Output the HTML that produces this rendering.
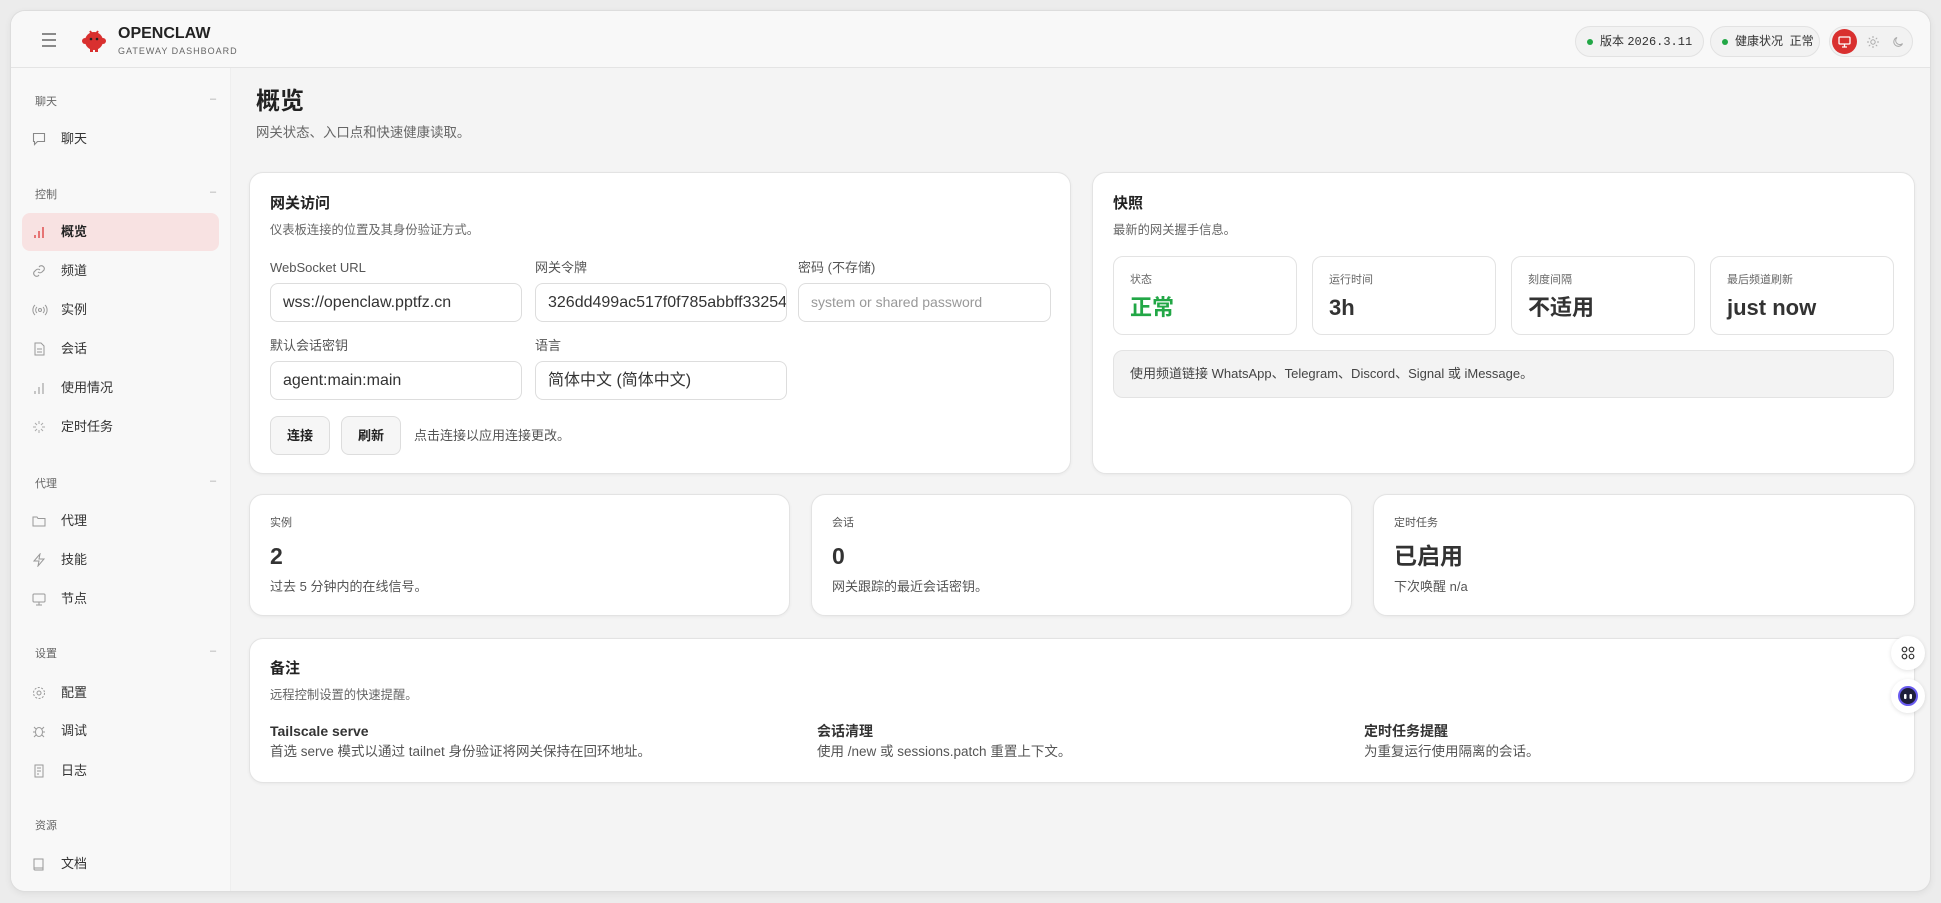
<!DOCTYPE html>
<html><head><meta charset="utf-8"><style>
*{box-sizing:border-box;margin:0;padding:0}
body{width:1941px;height:903px;background:#ececec;font-family:"Liberation Sans","Noto Sans CJK SC",sans-serif;color:#222;position:relative;overflow:hidden}
.a{position:absolute}
.card .a,.t1{line-height:1}
.win{left:11px;top:11px;width:1919px;height:880px;background:#f4f4f4;border-radius:14px;overflow:hidden;box-shadow:0 0 0 1px #ddd,0 2px 8px rgba(0,0,0,.08)}
.hdr{left:0;top:0;width:1919px;height:57px;background:#f8f8f8;border-bottom:1px solid #e4e4e4}
.side{left:0;top:57px;width:220px;height:823px;background:#f8f8f8;border-right:1px solid #eee}
.sec{font-size:11px;color:#666;left:24px}
.sec i{position:absolute;left:175px;top:0;font-style:normal;color:#aaa}
.it{left:11px;width:197px;height:38px;font-size:13px;color:#333;line-height:38px;padding-left:39px;border-radius:8px}
.it svg{position:absolute;left:10px;top:12px}
.act{background:#f8e2e2;color:#222;font-weight:bold}
.card{background:#fff;border:1px solid #e3e3e3;border-radius:14px;box-shadow:0 1px 3px rgba(0,0,0,.05)}
.ct{font-size:15px;font-weight:bold;color:#222}
.cs{font-size:13px;color:#666}
.cs2{font-size:12.3px;color:#666}
.lb{font-size:13px;color:#555}
.card .in{height:39px;border:1px solid #ddd;border-radius:8px;font-size:16px;color:#333;line-height:37px;padding-left:12px;background:#fff;overflow:hidden;white-space:nowrap}
.card .btn{height:39px;border:1px solid #ddd;border-radius:8px;background:#f6f6f6;font-size:13px;font-weight:bold;line-height:37px;text-align:center}
.st{border:1px solid #e3e3e3;border-radius:10px;width:184px;height:79px}
.st .l{position:absolute;left:16px;top:18px;font-size:11px;color:#666;line-height:1}
.st .v{position:absolute;left:16px;top:40px;font-size:22px;font-weight:bold;color:#333;line-height:1}
.pill{top:15px;height:31px;border:1px solid #e2e2e2;border-radius:16px;background:#f2f2f2;font-size:12px;line-height:29px;padding-left:24px;color:#333}
.pill b{position:absolute;left:11px;top:12px;width:6px;height:6px;border-radius:3px;background:#22a746}
.big{font-size:23px;font-weight:bold;color:#333}
</style></head><body>
<div class="a win">
 <div class="a hdr">
  <svg class="a" style="left:30px;top:22px" width="16" height="14" viewBox="0 0 16 14"><path d="M1 1h14M1 7h14M1 13h14" stroke="#666" stroke-width="1.6"/></svg>
  <svg class="a" style="left:70px;top:16px" width="26" height="26" viewBox="0 0 26 26"><ellipse cx="13" cy="14" rx="9" ry="9" fill="#d9302f"/><circle cx="4" cy="14" r="3" fill="#d9302f"/><circle cx="22" cy="14" r="3" fill="#d9302f"/><path d="M9 4l2 3M17 4l-2 3" stroke="#d9302f" stroke-width="2"/><circle cx="10" cy="12" r="1.3" fill="#222"/><circle cx="16" cy="12" r="1.3" fill="#222"/><rect x="9" y="22" width="3" height="3" fill="#d9302f"/><rect x="14" y="22" width="3" height="3" fill="#d9302f"/></svg>
  <div class="a" style="left:107px;top:14px;font-size:16px;font-weight:bold;color:#222">OPENCLAW</div>
  <div class="a" style="left:107px;top:35px;font-size:9px;letter-spacing:1px;color:#666">GATEWAY DASHBOARD</div>
  <div class="a pill" style="left:1564px;width:129px"><b></b>版本 <span style="font-family:'Liberation Mono',monospace">2026.3.11</span></div>
  <div class="a pill" style="left:1699px;width:110px"><b></b>健康状况&nbsp; 正常</div>
  <div class="a pill" style="left:1818px;width:84px;padding:0">
   <div class="a" style="left:2px;top:2px;width:25px;height:25px;border-radius:13px;background:#d9302f"></div>
   <svg class="a" style="left:8px;top:9px" width="13" height="12" viewBox="0 0 13 12"><rect x="1" y="1" width="11" height="7" rx="1" fill="none" stroke="#fff" stroke-width="1.3"/><path d="M6.5 8v3M4 11h5" stroke="#fff" stroke-width="1.3"/></svg>
   <svg class="a" style="left:37px;top:9px" width="12" height="12" viewBox="0 0 12 12"><circle cx="6" cy="6" r="2.2" fill="none" stroke="#aaa"/><path d="M6 0v2M6 10v2M0 6h2M10 6h2M1.8 1.8l1.4 1.4M8.8 8.8l1.4 1.4M10.2 1.8L8.8 3.2M3.2 8.8l-1.4 1.4" stroke="#aaa"/></svg>
   <svg class="a" style="left:62px;top:9px" width="12" height="12" viewBox="0 0 12 12"><path d="M10.5 7.5A4.5 4.5 0 1 1 5 1.5a3.5 3.5 0 0 0 5.5 6z" fill="none" stroke="#aaa"/></svg>
  </div>
 </div>
 <div class="a side">
  <div class="a sec" style="top:25px">聊天<i>–</i></div>
  <div class="a it" style="top:52px"><svg width="14" height="14" viewBox="0 0 14 14"><path d="M1.5 1.5h11v8h-7l-3 3v-3h-1z" fill="none" stroke="#888" stroke-width="1.1"/></svg>聊天</div>
  <div class="a sec" style="top:118px">控制<i>–</i></div>
  <div class="a it act" style="top:145px"><svg width="14" height="14" viewBox="0 0 14 14"><path d="M3 13V10M7 13V6M11 13V2" stroke="#e05050" stroke-width="1.5"/></svg>概览</div>
  <div class="a it" style="top:184px"><svg width="14" height="14" viewBox="0 0 14 14"><path d="M6 8a3 3 0 0 0 4 0l2-2a3 3 0 0 0-4-4l-1 1M8 6a3 3 0 0 0-4 0l-2 2a3 3 0 0 0 4 4l1-1" fill="none" stroke="#999" stroke-width="1.1"/></svg>频道</div>
  <div class="a it" style="top:223px"><svg width="16" height="14" viewBox="0 0 16 14"><circle cx="8" cy="7" r="1.5" fill="none" stroke="#999"/><path d="M5 4a4 4 0 0 0 0 6M11 4a4 4 0 0 1 0 6M3 2a7 7 0 0 0 0 10M13 2a7 7 0 0 1 0 10" fill="none" stroke="#999"/></svg>实例</div>
  <div class="a it" style="top:262px"><svg width="14" height="14" viewBox="0 0 14 14"><path d="M3 1h6l3 3v9H3z M5 7h5M5 10h5" fill="none" stroke="#999"/></svg>会话</div>
  <div class="a it" style="top:301px"><svg width="14" height="14" viewBox="0 0 14 14"><path d="M3 13V10M7 13V6M11 13V2" stroke="#aaa" stroke-width="1.3"/></svg>使用情况</div>
  <div class="a it" style="top:340px"><svg width="14" height="14" viewBox="0 0 14 14"><path d="M7 1v3M7 10v3M1 7h3M10 7h3M3 3l2 2M9 9l2 2M11 3L9 5M5 9l-2 2" stroke="#aaa"/></svg>定时任务</div>
  <div class="a sec" style="top:407px">代理<i>–</i></div>
  <div class="a it" style="top:434px"><svg width="14" height="14" viewBox="0 0 14 14"><path d="M1 3h4l1 1.5h7V12H1z" fill="none" stroke="#999"/></svg>代理</div>
  <div class="a it" style="top:473px"><svg width="14" height="14" viewBox="0 0 14 14"><path d="M8 1L2 8h5l-1 5 6-7H7z" fill="none" stroke="#999"/></svg>技能</div>
  <div class="a it" style="top:512px"><svg width="14" height="14" viewBox="0 0 14 14"><rect x="1" y="2" width="12" height="8" rx="1" fill="none" stroke="#999"/><path d="M7 10v3M4 13h6" stroke="#999"/></svg>节点</div>
  <div class="a sec" style="top:577px">设置<i>–</i></div>
  <div class="a it" style="top:606px"><svg width="14" height="14" viewBox="0 0 14 14"><circle cx="7" cy="7" r="2" fill="none" stroke="#999"/><circle cx="7" cy="7" r="5.5" fill="none" stroke="#999" stroke-dasharray="2 1.5"/></svg>配置</div>
  <div class="a it" style="top:644px"><svg width="14" height="14" viewBox="0 0 14 14"><ellipse cx="7" cy="8" rx="3.5" ry="4.5" fill="none" stroke="#999"/><path d="M1 8h2M11 8h2M2 3l2 2M12 3l-2 2M2 13l2-2M12 13l-2-2" stroke="#999"/></svg>调试</div>
  <div class="a it" style="top:684px"><svg width="14" height="14" viewBox="0 0 14 14"><path d="M3 1h8v12H3zM5 4h4M5 7h4M5 10h2" fill="none" stroke="#999"/></svg>日志</div>
  <div class="a sec" style="top:749px">资源</div>
  <div class="a it" style="top:777px"><svg width="14" height="14" viewBox="0 0 14 14"><path d="M2 2h9v11H3a1 1 0 0 1-1-1zM2 11h9" fill="none" stroke="#999"/></svg>文档</div>
 </div>
 <div class="a t1" style="left:245px;top:79px;font-size:24px;font-weight:bold;color:#222">概览</div>
 <div class="a t1" style="left:245px;top:115px;font-size:13.4px;color:#666">网关状态、入口点和快速健康读取。</div>

 <div class="a card" style="left:238px;top:161px;width:822px;height:302px">
  <div class="a ct" style="left:20px;top:23px">网关访问</div>
  <div class="a cs2" style="left:20px;top:51px">仪表板连接的位置及其身份验证方式。</div>
  <div class="a lb" style="left:20px;top:88px">WebSocket URL</div>
  <div class="a lb" style="left:285px;top:88px">网关令牌</div>
  <div class="a lb" style="left:548px;top:88px">密码 (不存储)</div>
  <div class="a in" style="left:20px;top:110px;width:252px">wss://openclaw.pptfz.cn</div>
  <div class="a in" style="left:285px;top:110px;width:252px">326dd499ac517f0f785abbff33254</div>
  <div class="a in" style="left:548px;top:110px;width:253px;color:#999;font-size:14px">system or shared password</div>
  <div class="a lb" style="left:20px;top:166px">默认会话密钥</div>
  <div class="a lb" style="left:285px;top:166px">语言</div>
  <div class="a in" style="left:20px;top:188px;width:252px">agent:main:main</div>
  <div class="a in" style="left:285px;top:188px;width:252px">简体中文 (简体中文)</div>
  <div class="a btn" style="left:20px;top:243px;width:60px">连接</div>
  <div class="a btn" style="left:91px;top:243px;width:60px">刷新</div>
  <div class="a cs" style="left:164px;top:256px;color:#555">点击连接以应用连接更改。</div>
 </div>

 <div class="a card" style="left:1081px;top:161px;width:823px;height:302px">
  <div class="a ct" style="left:20px;top:23px">快照</div>
  <div class="a cs2" style="left:20px;top:51px">最新的网关握手信息。</div>
  <div class="a st" style="left:20px;top:83px"><div class="l">状态</div><div class="v" style="color:#22a746">正常</div></div>
  <div class="a st" style="left:219px;top:83px"><div class="l">运行时间</div><div class="v">3h</div></div>
  <div class="a st" style="left:418px;top:83px"><div class="l">刻度间隔</div><div class="v">不适用</div></div>
  <div class="a st" style="left:617px;top:83px"><div class="l">最后频道刷新</div><div class="v">just now</div></div>
  <div class="a" style="left:20px;top:177px;width:781px;height:48px;background:#f3f3f3;border:1px solid #e3e3e3;border-radius:10px;font-size:13px;color:#444;line-height:46px;padding-left:16px">使用频道链接 WhatsApp、Telegram、Discord、Signal 或 iMessage。</div>
 </div>

 <div class="a card" style="left:238px;top:483px;width:541px;height:122px">
  <div class="a" style="left:20px;top:23px;font-size:11px;color:#555">实例</div>
  <div class="a big" style="left:20px;top:50px">2</div>
  <div class="a cs" style="left:20px;top:85px;color:#555">过去 5 分钟内的在线信号。</div>
 </div>
 <div class="a card" style="left:800px;top:483px;width:541px;height:122px">
  <div class="a" style="left:20px;top:23px;font-size:11px;color:#555">会话</div>
  <div class="a big" style="left:20px;top:50px">0</div>
  <div class="a cs" style="left:20px;top:85px;color:#555">网关跟踪的最近会话密钥。</div>
 </div>
 <div class="a card" style="left:1362px;top:483px;width:542px;height:122px">
  <div class="a" style="left:20px;top:23px;font-size:11px;color:#555">定时任务</div>
  <div class="a big" style="left:20px;top:50px">已启用</div>
  <div class="a cs" style="left:20px;top:85px;color:#555">下次唤醒 n/a</div>
 </div>

 <div class="a card" style="left:238px;top:627px;width:1666px;height:145px">
  <div class="a ct" style="left:20px;top:22px">备注</div>
  <div class="a cs2" style="left:20px;top:50px">远程控制设置的快速提醒。</div>
  <div class="a" style="left:20px;top:85px;font-size:14px;font-weight:bold;color:#333">Tailscale serve</div>
  <div class="a cs" style="left:20px;top:106px;color:#555;font-size:13.5px">首选 serve 模式以通过 tailnet 身份验证将网关保持在回环地址。</div>
  <div class="a" style="left:567px;top:85px;font-size:14px;font-weight:bold;color:#333">会话清理</div>
  <div class="a cs" style="left:567px;top:106px;color:#555;font-size:13.5px">使用 /new 或 sessions.patch 重置上下文。</div>
  <div class="a" style="left:1114px;top:85px;font-size:14px;font-weight:bold;color:#333">定时任务提醒</div>
  <div class="a cs" style="left:1114px;top:106px;color:#555;font-size:13.5px">为重复运行使用隔离的会话。</div>
 </div>

 <div class="a" style="left:1880px;top:625px;width:34px;height:34px;border-radius:17px;background:#fff;box-shadow:0 1px 4px rgba(0,0,0,.12)"><svg class="a" style="left:10px;top:10px" width="14" height="14" viewBox="0 0 14 14"><circle cx="3.5" cy="3.5" r="2.3" fill="none" stroke="#333" stroke-width="1.2"/><circle cx="10.5" cy="3.5" r="2.3" fill="none" stroke="#333" stroke-width="1.2"/><circle cx="3.5" cy="10.5" r="2.3" fill="none" stroke="#333" stroke-width="1.2"/><circle cx="10.5" cy="10.5" r="2.3" fill="none" stroke="#333" stroke-width="1.2"/></svg></div>
 <div class="a" style="left:1880px;top:668px;width:34px;height:34px;border-radius:17px;background:#fff;box-shadow:0 1px 4px rgba(0,0,0,.12)"><svg class="a" style="left:6px;top:6px" width="22" height="22" viewBox="0 0 22 22"><circle cx="11" cy="11" r="9" fill="#1f1f3a" stroke="#6a5cf0" stroke-width="2"/><rect x="7" y="9" width="2.5" height="5" rx="1" fill="#fff"/><rect x="12.5" y="9" width="2.5" height="5" rx="1" fill="#fff"/></svg></div>
</div>
</body></html>
